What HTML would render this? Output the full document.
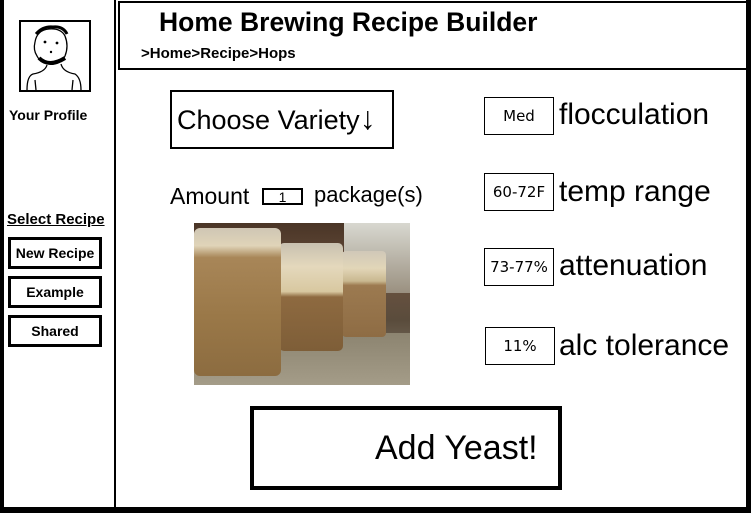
<!DOCTYPE html>
<html><head><meta charset="utf-8"><style>
*{margin:0;padding:0;box-sizing:border-box}
body{width:751px;height:513px;background:#fff;position:relative;overflow:hidden;font-family:"Liberation Sans",Arial,sans-serif;color:#000}
.a{position:absolute;white-space:nowrap}
.b{font-family:"Liberation Sans",sans-serif;font-weight:bold}
.sbtn{position:absolute;left:8px;width:94px;height:32px;border:3px solid #000;font-family:"Liberation Sans",sans-serif;font-weight:bold;font-size:14px;text-align:center;line-height:26px}
.vb{position:absolute;width:70px;height:38px;border:1px solid #000;font-family:"DejaVu Sans",sans-serif;font-size:15px;text-align:center;line-height:36px}
.lab{position:absolute;left:559px;font-size:30px;line-height:32px;white-space:nowrap}
</style></head><body>
<div class="a" style="left:0;top:0;width:4px;height:513px;background:#000"></div>
<div class="a" style="left:746px;top:0;width:5px;height:513px;background:#000"></div>
<div class="a" style="left:0;top:507px;width:751px;height:6px;background:#000"></div>
<div class="a" style="left:114px;top:0;width:2px;height:510px;background:#000"></div>
<div class="a" style="left:118px;top:1px;width:630px;height:69px;border:2px solid #000;border-right:none"></div>
<div class="a b" style="left:159px;top:7px;font-size:26.5px">Home Brewing Recipe Builder</div>
<div class="a b" style="left:141px;top:45px;font-size:15px">&gt;Home&gt;Recipe&gt;Hops</div>

<div class="a" style="left:19px;top:20px;width:72px;height:72px;border:2px solid #000">
<svg width="68" height="68" viewBox="0 0 68 68"><g fill="none" stroke="#000" stroke-width="1.3">
<path d="M14 20 Q16 8 28 7 Q40 6 44 14 Q48 24 44 34 Q40 42 30 42 Q20 42 16 34 Q12 28 14 20Z"/>
<path d="M15 12 Q22 4 32 5 Q42 4 46 12" stroke-width="3"/>
<path d="M18 36 Q28 46 44 36" stroke-width="4"/>
<path d="M26 43 Q24 50 12 52 Q6 54 6 68 M40 42 Q42 50 54 52 Q60 56 60 68 M14 58 L15 68 M52 58 L51 68"/>
</g><circle cx="24" cy="20" r="1.4"/><circle cx="36" cy="21" r="1.4"/><circle cx="30" cy="30" r="1.2"/></svg>
</div>
<div class="a b" style="left:9px;top:107px;font-size:14px">Your Profile</div>
<div class="a b" style="left:7px;top:211px;font-size:15px;text-decoration:underline">Select Recipe</div>
<div class="sbtn" style="top:237px">New Recipe</div>
<div class="sbtn" style="top:276px">Example</div>
<div class="sbtn" style="top:315px">Shared</div>

<div class="a" style="left:170px;top:90px;width:224px;height:59px;border:2px solid #000;font-size:27px;line-height:53px;padding-left:5px">Choose Variety<span style="font-size:32px">&#8595;</span></div>
<div class="a" style="left:170px;top:183px;font-size:23px">Amount</div>
<div class="a" style="left:262px;top:188px;width:41px;height:17px;border:2px solid #000;font-size:14px;text-align:center;line-height:14px">1</div>
<div class="a" style="left:314px;top:182px;font-size:22px">package(s)</div>

<div class="a" style="left:194px;top:223px;width:216px;height:162px;overflow:hidden;background:linear-gradient(#4a3526,#6b5240 35%,#5a4c3c 60%,#8a8070)">
<div class="a" style="left:150px;top:0;width:66px;height:70px;background:linear-gradient(#d8d8d0,#9a9080)"></div>
<div class="a" style="left:0;top:110px;width:216px;height:52px;background:linear-gradient(#8c8470,#a49c88)"></div>
<div class="a" style="left:148px;top:28px;width:44px;height:86px;border-radius:4px;background:linear-gradient(#d0c8b8 0,#e2d6b8 20%,#c9b890 35%,#9c7a50 40%,#8e6c44 100%)"></div>
<div class="a" style="left:85px;top:20px;width:64px;height:108px;border-radius:5px;background:linear-gradient(#c8c0b0 0,#e4d8bc 22%,#d8c8a0 45%,#8e6a40 50%,#7e5e38 100%)"></div>
<div class="a" style="left:0;top:5px;width:87px;height:148px;border-radius:6px;background:linear-gradient(#cfc6b4 0,#e0d4b8 12%,#a88658 20%,#9a7848 60%,#8c6c40 100%)"></div>
</div>

<div class="vb" style="left:484px;top:97px">Med</div>
<div class="lab" style="top:99px">flocculation</div>
<div class="vb" style="left:484px;top:173px">60-72F</div>
<div class="lab" style="top:176px">temp range</div>
<div class="vb" style="left:484px;top:248px">73-77%</div>
<div class="lab" style="top:250px">attenuation</div>
<div class="vb" style="left:485px;top:327px">11%</div>
<div class="lab" style="top:330px">alc tolerance</div>

<div class="a" style="left:250px;top:406px;width:312px;height:84px;border:4px solid #000;font-size:34px;line-height:76px;padding-left:121px">Add Yeast!</div>
</body></html>
